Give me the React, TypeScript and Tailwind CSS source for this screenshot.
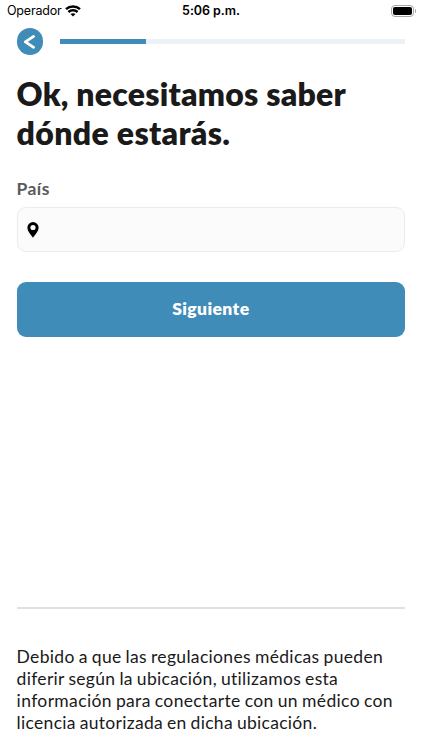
import type { ReactNode } from 'react'

function Line({ className, children }: { className: string; children: ReactNode }) {
  return <span className={`block whitespace-nowrap ${className}`}>{children}</span>
}

function WifiIcon() {
  return (
    <svg width="16" height="12" viewBox="0 0 16 12" fill="none" stroke="#000" strokeWidth="2.5">
      <path d="M1 4.1C5 .5 11 .5 15 4.1" />
      <path d="M3.4 7c2.6-2.3 6.6-2.3 9.2 0" />
      <path d="M8 11.6 5.5 9.1c1.3-1.2 3.7-1.2 5 0Z" fill="#000" stroke="none" />
    </svg>
  )
}

function StatusBar() {
  return (
    <header className="grid h-[22px] grid-cols-3 items-center text-black">
      <div className="flex items-center gap-[4px] pl-[7px]">
        <span className="font-[Inter,sans-serif] text-[12.5px] leading-[22px] tracking-[-0.2px]">Operador</span>
        <WifiIcon />
      </div>
      <span className="text-center font-[Inter,sans-serif] text-[12.5px] leading-[22px] font-semibold tracking-[-0.05px]">
        5:06 p.m.
      </span>
      <div className="flex items-center justify-end gap-px pr-[6px]">
        <div className="h-[12px] w-[23px] rounded-[4px] border border-[#a6a6a6] p-px">
          <div className="h-full rounded-[2px] bg-black" />
        </div>
        <div className="h-[4px] w-px rounded-r bg-[#a6a6a6]" />
      </div>
    </header>
  )
}

function Progress() {
  return (
    <div className="flex items-center pt-[6px]">
      <button aria-label="Atrás" className="h-[27px] w-[26px] rounded-full bg-[#408cb8]">
        <svg width="26" height="27" viewBox="0 0 26 27" fill="none" stroke="#fff" strokeWidth="2.8" strokeLinecap="round" strokeLinejoin="round">
          <path d="M16.6 8.4 8.3 13.9l8.3 5.4" />
        </svg>
      </button>
      <div className="ml-[17px] h-[5px] flex-1 bg-[#ebf1f6]">
        <div className="h-full w-1/4 bg-[#408cb8]" />
      </div>
    </div>
  )
}

export default function App() {
  return (
    <div className="flex h-[750px] w-[422px] flex-col overflow-hidden bg-white font-[Lato,sans-serif] text-[#1a1a1a]">
      <StatusBar />
      <main className="flex flex-1 flex-col pr-[17px] pl-[16.6px]">
        <Progress />
        <h1 className="mt-[19px] text-[32px] leading-[39px] font-extrabold">
          <Line className="tracking-[0.23px]">Ok, necesitamos saber</Line>
          <Line className="tracking-[0.33px]">dónde estarás.</Line>
        </h1>
        <label className="mt-[27px] text-[17.5px] leading-[20px] font-bold tracking-[0.4px] text-[#5a5a5c]">País</label>
        <div className="mt-[8px] flex h-[45px] items-center rounded-[9px] border border-[#ebebeb] bg-[#fbfbfb] pl-[9px]">
          <svg width="12" height="16" viewBox="0 0 12 16" fill="#000">
            <path fillRule="evenodd" d="M6 0a5.6 5.6 0 0 0-5.6 5.6C.4 9.2 3.6 12.7 6 15.8c2.4-3.1 5.6-6.6 5.6-10.2A5.6 5.6 0 0 0 6 0Zm0 2.9a2.6 2.6 0 1 1 0 5.2 2.6 2.6 0 0 1 0-5.2Z" />
          </svg>
        </div>
        <button className="mt-[30px] h-[55px] rounded-[9px] bg-[#408cb8] text-[17.5px] font-extrabold tracking-[0.4px] text-white">
          Siguiente
        </button>
        <footer className="mt-auto border-t-2 border-[#e1e1e1] pt-[37px] pb-[16px] text-[17.5px] leading-[22px] [word-spacing:-0.8px]">
          <Line className="tracking-[0.33px]">Debido a que las regulaciones médicas pueden</Line>
          <Line className="tracking-[0.31px]">diferir según la ubicación, utilizamos esta</Line>
          <Line className="tracking-[0.36px]">información para conectarte con un médico con</Line>
          <Line className="tracking-[0.3px]">licencia autorizada en dicha ubicación.</Line>
        </footer>
      </main>
    </div>
  )
}
